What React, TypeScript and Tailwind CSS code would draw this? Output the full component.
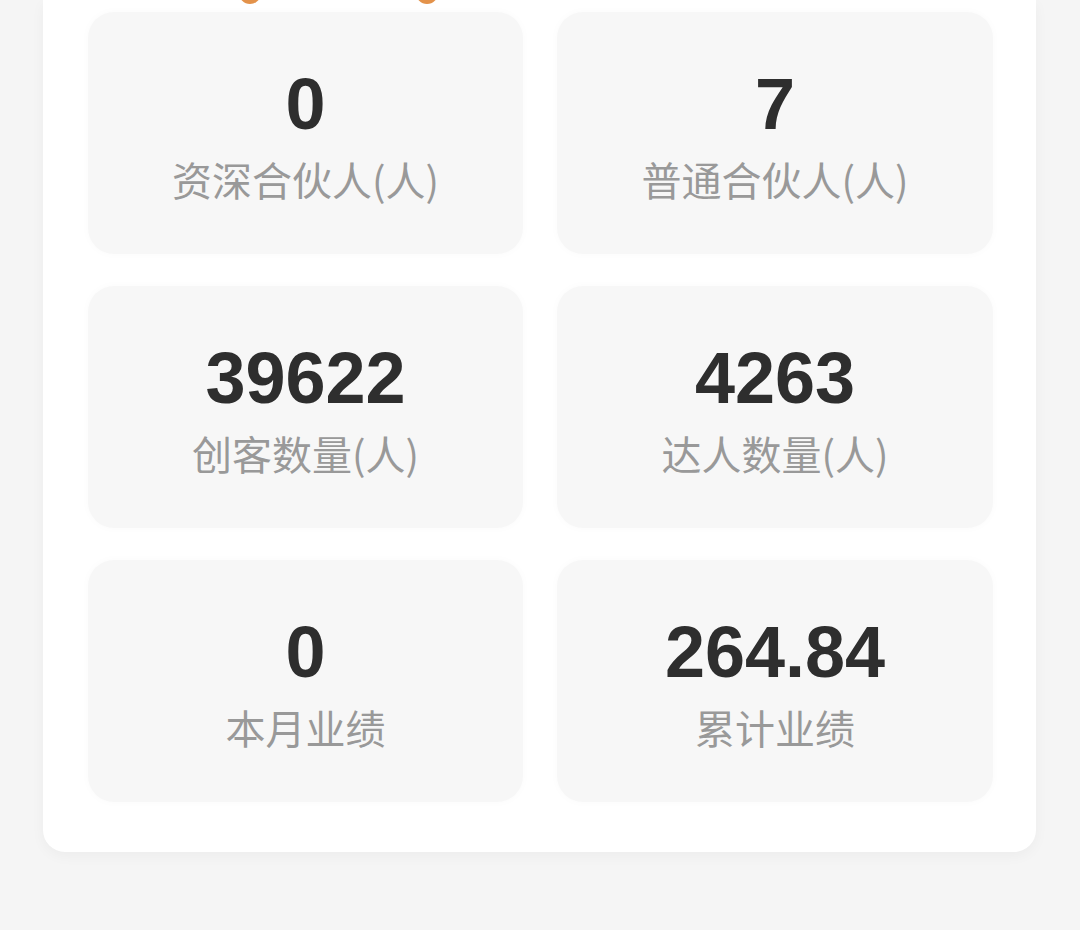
import React from "react";

const items = [
  { value: "0", label: "资深合伙人(人)" },
  { value: "7", label: "普通合伙人(人)" },
  { value: "39622", label: "创客数量(人)" },
  { value: "4263", label: "达人数量(人)" },
  { value: "0", label: "本月业绩" },
  { value: "264.84", label: "累计业绩" },
];

export default function App() {
  return (
    <div className="min-h-[930px] w-[1080px] bg-[#f5f5f5] overflow-hidden">
      <div className="relative ml-[43px] w-[993px] rounded-b-[22px] bg-white pl-[45px] pr-[43px] pt-[12px] pb-[50px] shadow-[0_4px_14px_rgba(0,0,0,0.04)]">
        <div className="absolute left-[196px] top-[-18px] h-[22px] w-[22px] rounded-full bg-[#e3924a]" />
        <div className="absolute left-[373px] top-[-18px] h-[22px] w-[22px] rounded-full bg-[#e3924a]" />
        <div className="grid grid-cols-[435px_436px] gap-x-[34px] gap-y-[32px]">
          {items.map((it, i) => (
            <div
              key={i}
              className="flex h-[242px] flex-col items-center justify-center gap-[19px] rounded-[26px] bg-[#f7f7f7] shadow-[0_0_8px_rgba(0,0,0,0.025)]"
            >
              <div
                className="text-[72px] font-bold leading-none text-[#2e2e2e]"
                style={{ fontFamily: '"Liberation Sans", Arial, sans-serif' }}
              >
                {it.value}
              </div>
              <div
                className="text-[40px] leading-none text-[#999999]"
                style={{ fontFamily: '"Noto Sans CJK SC", "Noto Sans", sans-serif' }}
              >
                {it.label}
              </div>
            </div>
          ))}
        </div>
      </div>
    </div>
  );
}
